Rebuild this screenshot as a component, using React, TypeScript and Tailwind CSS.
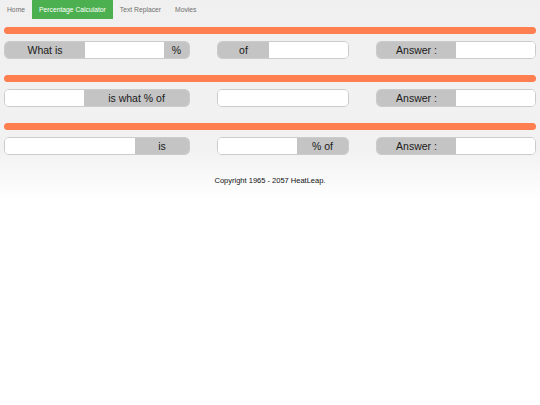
import React from 'react'

// w: fixed width class; without it the part takes what is left
type Part = { kind: 'label'; text: string; w?: string } | { kind: 'input'; w?: string }

type GroupSpec = { width: string; parts: Part[] }

const answer: GroupSpec = {
  width: 'w-[160px]',
  parts: [{ kind: 'label', text: 'Answer :' }, { kind: 'input', w: 'w-[79px]' }],
}

const rows: GroupSpec[][] = [
  [
    {
      width: 'w-[186px]',
      parts: [
        { kind: 'label', text: 'What is', w: 'w-[80px]' },
        { kind: 'input', w: 'w-[79px]' },
        { kind: 'label', text: '%' },
      ],
    },
    {
      width: 'w-[132px]',
      parts: [{ kind: 'label', text: 'of' }, { kind: 'input', w: 'w-[79px]' }],
    },
    answer,
  ],
  [
    {
      width: 'w-[186px]',
      parts: [{ kind: 'input', w: 'w-[79px]' }, { kind: 'label', text: 'is what % of' }],
    },
    {
      width: 'w-[132px]',
      parts: [{ kind: 'input' }],
    },
    answer,
  ],
  [
    {
      width: 'w-[186px]',
      parts: [{ kind: 'input' }, { kind: 'label', text: 'is', w: 'w-[54px]' }],
    },
    {
      width: 'w-[132px]',
      parts: [{ kind: 'input', w: 'w-[79px]' }, { kind: 'label', text: '% of' }],
    },
    answer,
  ],
]

const navItems = ['Home', 'Percentage Calculator', 'Text Replacer', 'Movies']

function Group({ width, parts }: GroupSpec) {
  return (
    <div className={`${width} flex h-[18px] overflow-hidden rounded-[5px] border border-[#cbcbcb] bg-white`}>
      {parts.map((part, i) =>
        part.kind === 'label' ? (
          <span
            key={i}
            className={`${part.w ? `${part.w} shrink-0` : 'w-0 flex-1'} flex items-center justify-center bg-[#c4c4c4] text-[10.5px] leading-none text-[#1a1a1a]`}
          >
            {part.text}
          </span>
        ) : (
          <input
            key={i}
            type="text"
            className={`${part.w ? `${part.w} shrink-0` : 'w-0 flex-1'} h-full min-w-0 bg-white px-1 text-[10px] outline-none`}
          />
        )
      )}
    </div>
  )
}

export default function App() {
  return (
    <div className="min-h-screen bg-white font-['Liberation_Sans',Arial,sans-serif]">
      <div className="bg-linear-to-b from-[#f0f0f0] via-[#f2f2f2] via-75% to-white pb-[15px]">
        <nav className="flex h-[19px]">
          {navItems.map((item) => (
            <a
              key={item}
              href="#"
              className={
                item === 'Percentage Calculator'
                  ? 'bg-[#4caf50] px-[7px] text-[6.75px] leading-[19px] text-white'
                  : 'px-[7px] text-[6.75px] leading-[19px] text-[#6f6f6f]'
              }
            >
              {item}
            </a>
          ))}
        </nav>

        <div className="px-[4px] pt-[8px]">
          {rows.map((groups, i) => (
            <section key={i} className="mb-[16px]">
              <div className="h-[7px] rounded-full bg-[#ff7f50]" />
              <div className="mt-[7px] flex justify-between">
                {groups.map((g, j) => (
                  <Group key={j} width={g.width} parts={g.parts} />
                ))}
              </div>
            </section>
          ))}
        </div>

        <p className="mt-[21px] text-center text-[7.5px] leading-[9px] text-[#111]">
          Copyright 1965 - 2057 HeatLeap.
        </p>
      </div>
    </div>
  )
}
